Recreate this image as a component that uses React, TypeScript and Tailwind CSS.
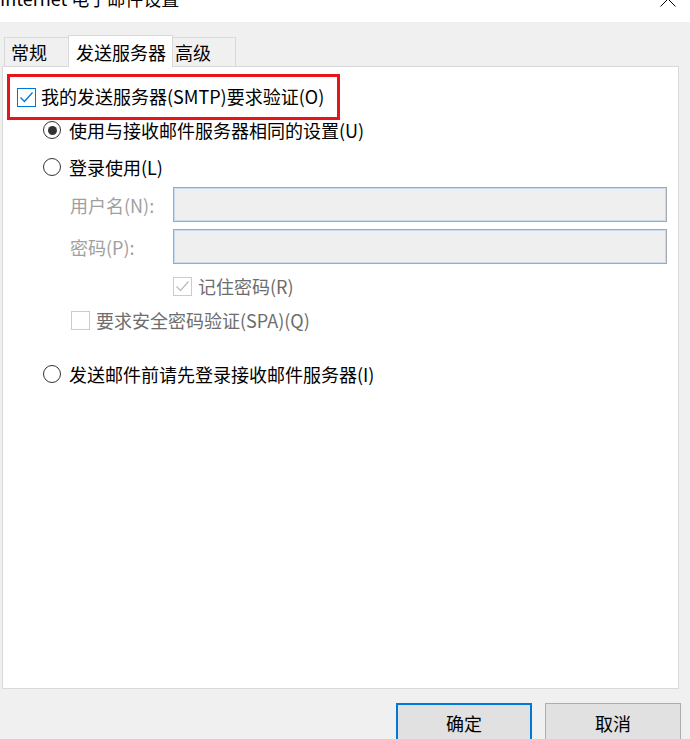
import React from "react";

function CheckBox({ checked, disabled, focused }: { checked?: boolean; disabled?: boolean; focused?: boolean }) {
  const border = focused ? "border-[#0078d7]" : disabled ? "border-[#cccccc]" : "border-[#333333]";
  const stroke = disabled ? "#bfbfbf" : focused ? "#0078d7" : "#333333";
  return (
    <div className={`w-[19px] h-[19px] border bg-white ${border} flex items-center justify-center shrink-0`}>
      {checked && (
        <svg width="17" height="17" viewBox="0 0 17 17">
          <path d="M2.5 8.5 L6.5 12.5 L14.5 3.5" fill="none" stroke={stroke} strokeWidth="1.3" />
        </svg>
      )}
    </div>
  );
}

function Radio({ checked }: { checked?: boolean }) {
  return (
    <div className="w-[18px] h-[18px] rounded-full border border-[#333333] bg-white flex items-center justify-center shrink-0">
      {checked && <div className="w-[9px] h-[9px] rounded-full bg-[#333333]" />}
    </div>
  );
}

export default function App() {
  return (
    <div className="w-[690px] h-[739px] bg-[#f0f0f0] overflow-hidden font-['Noto_Sans_CJK_SC','Noto_Sans',sans-serif] text-[18px] leading-none text-black">
      {/* title bar */}
      <div className="h-[22px] bg-white flex justify-between overflow-hidden">
        <div className="mt-[-11px] text-[18px] leading-[18px] text-[#000] whitespace-nowrap">Internet 电子邮件设置</div>
        <svg className="mt-[-9px] mr-[14px]" width="16" height="16" viewBox="0 0 16 16">
          <path d="M0.5 0.5 L15.5 15.5 M15.5 0.5 L0.5 15.5" stroke="#000" strokeWidth="1" fill="none" />
        </svg>
      </div>

      {/* tabs */}
      <div className="pt-[12px] pl-[4px] flex items-end h-[44px]">
        <div className="w-[66px] h-[29px] border border-b-0 border-[#d9d9d9] bg-[#f0f0f0] flex items-center pl-[6px]">
          常规
        </div>
        <div className="relative z-10 -ml-[2px] -mr-[2px] mb-[-1px] w-[105px] h-[32px] border border-b-0 border-[#d9d9d9] bg-white flex items-center pl-[7px]">
          发送服务器
        </div>
        <div className="w-[65px] h-[29px] border border-b-0 border-[#d9d9d9] bg-[#f0f0f0] flex items-center pl-[3px]">
          高级
        </div>
      </div>

      {/* panel */}
      <div className="ml-[2px] w-[677px] h-[623px] border border-[#d9d9d9] bg-white pl-[4px] pt-[7px]">
        <div className="w-[333px] h-[46px] border-[3px] border-[#e8141c] flex items-center pl-[7px] gap-[5px]">
          <CheckBox checked focused />
          <span className="-mt-[2px]">我的发送服务器(SMTP)要求验证(O)</span>
        </div>

        <div className="pl-[36px]">
          <div className="mt-[0px] h-[20px] flex items-center gap-[8px]">
            <Radio checked />
            <span className="-mt-[1px]">使用与接收邮件服务器相同的设置(U)</span>
          </div>
          <div className="mt-[17px] h-[20px] flex items-center gap-[8px]">
            <Radio />
            <span className="-mt-[1px]">登录使用(L)</span>
          </div>
        </div>

        <div className="pl-[63px] pr-[11px]">
          <div className="mt-[10px] h-[35px] flex items-center">
            <span className="w-[103px] text-[#a0a0a0]">用户名(N):</span>
            <div className="flex-1 h-[35px] border border-[#a3a9b3] bg-[#efefef] shadow-[inset_0_0_0_1px_#c9dcf0]" />
          </div>
          <div className="mt-[7px] h-[35px] flex items-center">
            <span className="w-[103px] text-[#a0a0a0]">密码(P):</span>
            <div className="flex-1 h-[35px] border border-[#a3a9b3] bg-[#efefef] shadow-[inset_0_0_0_1px_#c9dcf0]" />
          </div>
          <div className="mt-[13px] h-[19px] flex items-center gap-[6px] pl-[103px]">
            <CheckBox checked disabled />
            <span className="-mt-[1px] text-[#6d6d6d]">记住密码(R)</span>
          </div>
          <div className="mt-[15px] h-[19px] flex items-center gap-[6px] pl-[1px]">
            <CheckBox disabled />
            <span className="-mt-[1px] text-[#6d6d6d]">要求安全密码验证(SPA)(Q)</span>
          </div>
        </div>

        <div className="pl-[36px]">
          <div className="mt-[34px] h-[20px] flex items-center gap-[8px]">
            <Radio />
            <span className="-mt-[1px]">发送邮件前请先登录接收邮件服务器(I)</span>
          </div>
        </div>
      </div>

      {/* buttons */}
      <div className="mt-[14px] flex justify-end gap-[13px] pr-[9px]">
        <div className="w-[136px] h-[40px] border-2 border-[#0078d7] bg-[#e1e1e1] flex items-center justify-center">确定</div>
        <div className="w-[136px] h-[40px] border border-[#adadad] bg-[#e1e1e1] flex items-center justify-center">取消</div>
      </div>
    </div>
  );
}
